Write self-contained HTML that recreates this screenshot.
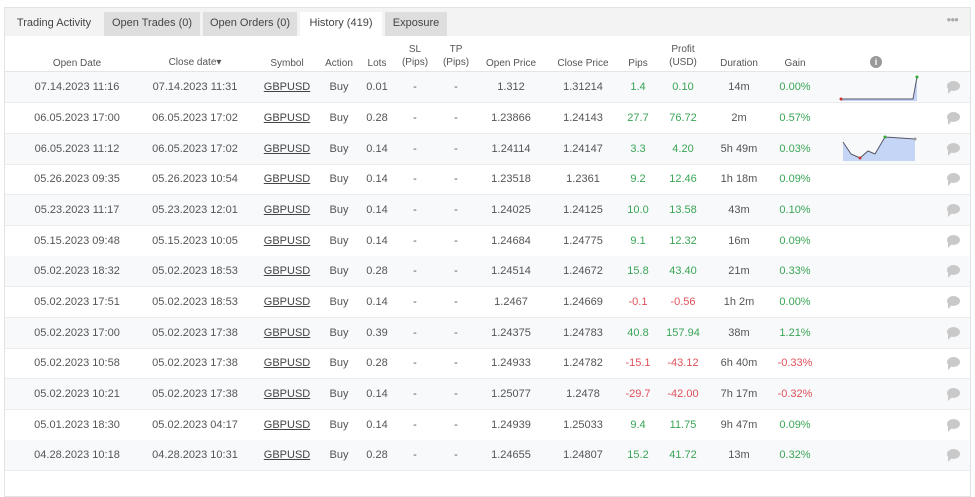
<!DOCTYPE html>
<html><head><meta charset="utf-8"><style>
*{margin:0;padding:0;box-sizing:border-box}
body{width:975px;height:477px;background:#fff;font-family:"Liberation Sans",sans-serif;font-size:11px;color:#555;overflow:hidden;position:relative}
.box{position:absolute;left:4px;top:7px;width:967px;height:490px;border:1px solid #e3e3e3}
.tabs{position:absolute;left:5px;top:8px;width:965px;height:28px;background:#f3f3f3}
.tab{position:absolute;top:4px;height:24px;line-height:22px;font-size:11px;color:#444;text-align:center}
.dots{position:absolute;right:12px;top:7px;color:#aaa;font-size:8px;letter-spacing:-1px}
.row{position:absolute;left:5px;width:965px;height:31px;border-bottom:1px solid #ececec}
.row span{position:absolute;top:0;line-height:31px;transform:translateX(-50%);white-space:nowrap}
.row span:nth-child(1){left:72px}.row span:nth-child(2){left:190px}
.row span:nth-child(3){left:282px;text-decoration:underline;color:#444}
.row span:nth-child(4){left:334px}.row span:nth-child(5){left:372px}
.row span:nth-child(6){left:410px}.row span:nth-child(7){left:451px}
.row span:nth-child(8){left:506px}.row span:nth-child(9){left:578px}
.row span:nth-child(10){left:633px}.row span:nth-child(11){left:678px}
.row span:nth-child(12){left:734px}.row span:nth-child(13){left:790px}
.odd{background:#f8f9fb}
.g{color:#3aa556}.r{color:#e0505a}
.c{position:absolute;left:942px;top:9px;width:13px;height:10px;background:#c9c9c9;border-radius:50%}
.c:after{content:"";position:absolute;left:1px;bottom:-3px;border:3px solid transparent;border-top-color:#c9c9c9;border-left-color:#c9c9c9}
.hd{position:absolute;top:36px;left:5px;width:965px;height:36px;border-bottom:1px solid #e5e5e5;font-size:10px;color:#555}
.hd div{position:absolute;transform:translateX(-50%);text-align:center;line-height:13px;white-space:nowrap}
</style></head><body>
<div class="box"></div>
<div class="tabs">
<div class="tab" style="left:2px;width:94px;background:#f3f3f3">Trading Activity</div>
<div class="tab" style="left:99px;width:96px;background:#dedede">Open Trades (0)</div>
<div class="tab" style="left:198px;width:94px;background:#dedede">Open Orders (0)</div>
<div class="tab" style="left:295px;width:82px;background:#fff;height:24px">History (419)</div>
<div class="tab" style="left:380px;width:62px;background:#dedede">Exposure</div>
<div class="dots">●●●</div>
</div>
<div class="hd">
<div style="left:72px;top:21px">Open Date</div>
<div style="left:190px;top:20px">Close date▾</div>
<div style="left:282px;top:21px">Symbol</div>
<div style="left:334px;top:21px">Action</div>
<div style="left:372px;top:21px">Lots</div>
<div style="left:410px;top:7px">SL<br>(Pips)</div>
<div style="left:451px;top:7px">TP<br>(Pips)</div>
<div style="left:506px;top:21px">Open Price</div>
<div style="left:578px;top:21px">Close Price</div>
<div style="left:633px;top:21px">Pips</div>
<div style="left:678px;top:7px">Profit<br>(USD)</div>
<div style="left:734px;top:21px">Duration</div>
<div style="left:790px;top:21px">Gain</div>
<div style="left:871px;top:20px;width:12px;height:12px;border-radius:50%;background:#999;color:#fff;font-size:9px;line-height:12px;font-weight:bold">i</div>
</div>

<div class="row odd" style="top:72px"><span>07.14.2023 11:16</span><span>07.14.2023 11:31</span><span>GBPUSD</span><span>Buy</span><span>0.01</span><span>-</span><span>-</span><span>1.312</span><span>1.31214</span><span class="g">1.4</span><span class="g">0.10</span><span>14m</span><span class="g">0.00%</span><i class="c"></i>
<svg style="position:absolute;left:830px;top:2px" width="90" height="28"><path d="M6 25 L78 25 L82 3 L82 27 L6 27Z" fill="#c5d5f5"/><polyline points="6,25 78,25 82,3" fill="none" stroke="#556" stroke-width="1"/><circle cx="6" cy="25" r="1.5" fill="#c33"/><circle cx="82" cy="3" r="1.5" fill="#3a3"/></svg></div>
<div class="row" style="top:103px"><span>06.05.2023 17:00</span><span>06.05.2023 17:02</span><span>GBPUSD</span><span>Buy</span><span>0.28</span><span>-</span><span>-</span><span>1.23866</span><span>1.24143</span><span class="g">27.7</span><span class="g">76.72</span><span>2m</span><span class="g">0.57%</span><i class="c"></i></div>
<div class="row odd" style="top:134px"><span>06.05.2023 11:12</span><span>06.05.2023 17:02</span><span>GBPUSD</span><span>Buy</span><span>0.14</span><span>-</span><span>-</span><span>1.24114</span><span>1.24147</span><span class="g">3.3</span><span class="g">4.20</span><span>5h 49m</span><span class="g">0.03%</span><i class="c"></i>
<svg style="position:absolute;left:830px;top:0px" width="90" height="30"><path d="M8 8 L16 20 L25 24 L33 17 L40 20 L50 3 L80 5 L80 27 L8 27Z" fill="#c5d5f5"/><polyline points="8,8 16,20 25,24 33,17 40,20 50,3 80,5" fill="none" stroke="#556" stroke-width="1"/><circle cx="25" cy="24" r="1.5" fill="#c33"/><circle cx="50" cy="3" r="1.5" fill="#3a3"/><circle cx="80" cy="5" r="1.5" fill="#999"/></svg></div>
<div class="row" style="top:164px"><span>05.26.2023 09:35</span><span>05.26.2023 10:54</span><span>GBPUSD</span><span>Buy</span><span>0.14</span><span>-</span><span>-</span><span>1.23518</span><span>1.2361</span><span class="g">9.2</span><span class="g">12.46</span><span>1h 18m</span><span class="g">0.09%</span><i class="c"></i></div>
<div class="row odd" style="top:195px"><span>05.23.2023 11:17</span><span>05.23.2023 12:01</span><span>GBPUSD</span><span>Buy</span><span>0.14</span><span>-</span><span>-</span><span>1.24025</span><span>1.24125</span><span class="g">10.0</span><span class="g">13.58</span><span>43m</span><span class="g">0.10%</span><i class="c"></i></div>
<div class="row" style="top:226px"><span>05.15.2023 09:48</span><span>05.15.2023 10:05</span><span>GBPUSD</span><span>Buy</span><span>0.14</span><span>-</span><span>-</span><span>1.24684</span><span>1.24775</span><span class="g">9.1</span><span class="g">12.32</span><span>16m</span><span class="g">0.09%</span><i class="c"></i></div>
<div class="row odd" style="top:256px"><span>05.02.2023 18:32</span><span>05.02.2023 18:53</span><span>GBPUSD</span><span>Buy</span><span>0.28</span><span>-</span><span>-</span><span>1.24514</span><span>1.24672</span><span class="g">15.8</span><span class="g">43.40</span><span>21m</span><span class="g">0.33%</span><i class="c"></i></div>
<div class="row" style="top:287px"><span>05.02.2023 17:51</span><span>05.02.2023 18:53</span><span>GBPUSD</span><span>Buy</span><span>0.14</span><span>-</span><span>-</span><span>1.2467</span><span>1.24669</span><span class="r">-0.1</span><span class="r">-0.56</span><span>1h 2m</span><span class="g">0.00%</span><i class="c"></i></div>
<div class="row odd" style="top:318px"><span>05.02.2023 17:00</span><span>05.02.2023 17:38</span><span>GBPUSD</span><span>Buy</span><span>0.39</span><span>-</span><span>-</span><span>1.24375</span><span>1.24783</span><span class="g">40.8</span><span class="g">157.94</span><span>38m</span><span class="g">1.21%</span><i class="c"></i></div>
<div class="row" style="top:348px"><span>05.02.2023 10:58</span><span>05.02.2023 17:38</span><span>GBPUSD</span><span>Buy</span><span>0.28</span><span>-</span><span>-</span><span>1.24933</span><span>1.24782</span><span class="r">-15.1</span><span class="r">-43.12</span><span>6h 40m</span><span class="r">-0.33%</span><i class="c"></i></div>
<div class="row odd" style="top:379px"><span>05.02.2023 10:21</span><span>05.02.2023 17:38</span><span>GBPUSD</span><span>Buy</span><span>0.14</span><span>-</span><span>-</span><span>1.25077</span><span>1.2478</span><span class="r">-29.7</span><span class="r">-42.00</span><span>7h 17m</span><span class="r">-0.32%</span><i class="c"></i></div>
<div class="row" style="top:410px"><span>05.01.2023 18:30</span><span>05.02.2023 04:17</span><span>GBPUSD</span><span>Buy</span><span>0.14</span><span>-</span><span>-</span><span>1.24939</span><span>1.25033</span><span class="g">9.4</span><span class="g">11.75</span><span>9h 47m</span><span class="g">0.09%</span><i class="c"></i></div>
<div class="row odd" style="top:440px"><span>04.28.2023 10:18</span><span>04.28.2023 10:31</span><span>GBPUSD</span><span>Buy</span><span>0.28</span><span>-</span><span>-</span><span>1.24655</span><span>1.24807</span><span class="g">15.2</span><span class="g">41.72</span><span>13m</span><span class="g">0.32%</span><i class="c"></i></div>
</body></html>
